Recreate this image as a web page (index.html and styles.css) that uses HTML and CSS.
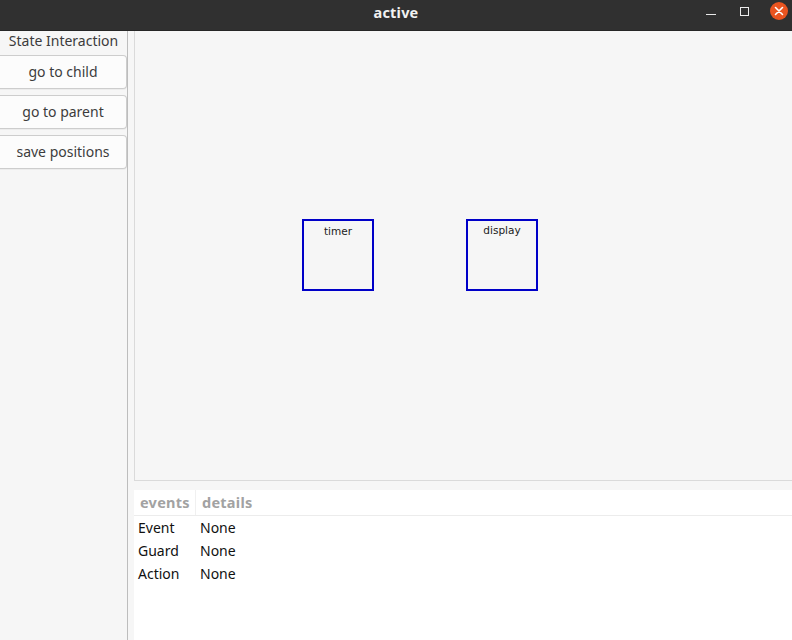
FILE: index.html
```html
<!DOCTYPE html>
<html>
<head>
<meta charset="utf-8">
<link rel="stylesheet" href="styles.css">
</head>
<body>
<div class="window">
  <div class="titlebar">
    <div class="title">active</div>
    <div class="controls">
      <span class="ctl min"></span>
      <span class="ctl max"></span>
      <span class="ctl close">
        <svg width="18" height="18" viewBox="0 0 18 18"><path d="M5.5 5.5 L12.5 12.5 M12.5 5.5 L5.5 12.5" stroke="#fff" stroke-width="1.6" stroke-linecap="round"/></svg>
      </span>
    </div>
  </div>
  <div class="body">
    <div class="sidebar">
      <div class="side-label">State Interaction</div>
      <button class="btn">go to child</button>
      <button class="btn">go to parent</button>
      <button class="btn">save positions</button>
    </div>
    <div class="divider"></div>
    <div class="main">
      <div class="canvas">
        <div class="node" style="left:167px;top:188px"><span class="node-label">timer</span></div>
        <div class="node" style="left:331px;top:188px"><span class="node-label d">display</span></div>
      </div>
      <div class="table">
        <div class="thead">
          <div class="th h1">events</div>
          <div class="th h2">details</div>
        </div>
        <div class="row"><div class="c1">Event</div><div class="c2">None</div></div>
        <div class="row"><div class="c1">Guard</div><div class="c2">None</div></div>
        <div class="row"><div class="c1">Action</div><div class="c2">None</div></div>
      </div>
    </div>
  </div>
</div>
</body>
</html>
```

FILE: styles.css
```css
* { box-sizing: border-box; }
html, body { margin: 0; padding: 0; }
body {
  width: 792px;
  height: 640px;
  overflow: hidden;
  font-family: "Noto Sans", "DejaVu Sans", sans-serif;
  background: #f6f6f6;
}
.window { display: flex; flex-direction: column; height: 640px; }
.titlebar {
  height: 31px;
  background: #303030;
  position: relative;
  display: flex;
  align-items: center;
  justify-content: center;
  border-bottom: 1px solid #262626;
}
.title {
  color: #f2f2f2;
  font-weight: bold;
  font-size: 14.5px;
  letter-spacing: 0.2px;
  margin-top: -6px;
}
.controls {
  position: absolute;
  right: 4px;
  top: 3px;
  display: flex;
  align-items: center;
  gap: 0;
}
.ctl { display: block; position: relative; }
.min { width: 10px; height: 1px; background: #e8e8e8; margin-right: 24px; margin-top: 5px; }
.max { width: 9px; height: 9px; border: 1.5px solid #ececec; margin-right: 21px; margin-top: 0px; }
.close {
  width: 18px; height: 18px; border-radius: 50%;
  background: #e95420;
  display: flex; align-items: center; justify-content: center;
  margin-top: -1px;
}
.close svg { display: block; }
.body { flex: 1; display: flex; min-height: 0; }
.sidebar {
  width: 127px;
  background: #f6f6f6;
  display: flex;
  flex-direction: column;
  padding-top: 0px;
}
.side-label {
  text-align: center;
  font-size: 14px;
  color: #3c3c3c;
  height: 24px;
  line-height: 19px;
}
.btn {
  font-family: inherit;
  font-size: 14px;
  color: #3c3c3c;
  height: 34px;
  width: 127px;
  margin: 0 0 6px 0;
  background: #fcfcfc;
  border: 1px solid #cdcdcd;
  border-left: none;
  border-radius: 0 4px 4px 0;
  box-shadow: 0 1px 0 rgba(0,0,0,0.04);
  padding: 0 0 2px 0;
}
.divider {
  width: 1px;
  background: #bdbdbd;
}
.main {
  flex: 1;
  display: flex;
  flex-direction: column;
  padding-left: 6px;
  background: #f6f6f6;
}
.canvas {
  height: 450px;
  border: 1px solid #dadada;
  border-right: none;
  border-top: none;
  background: #f6f6f6;
  position: relative;
}
.node {
  position: absolute;
  width: 72px;
  height: 72px;
  border: 2px solid #0000c8;
  display: flex;
  justify-content: center;
}
.node-label {
  font-family: "DejaVu Sans", sans-serif;
  font-size: 10.5px;
  color: #222;
  margin-top: 4px;
}
.node-label.d { margin-top: 3px; }
.table {
  flex: 1;
  margin-top: 9px;
  background: #fff;
  font-size: 14px;
}
.thead {
  display: flex;
  height: 26px;
  border-bottom: 1px solid #ececec;
  align-items: stretch;
}
.th { color: #a2a2a2; font-weight: bold; line-height: 23px; padding-top: 1px; font-size: 14.5px; letter-spacing: 0.25px; }
.th.h1 { width: 62px; padding-left: 6px; border-right: 1px solid #f0f0f0; }
.th.h2 { padding-left: 6px; }
.c1 { width: 62px; padding-left: 4px; }
.c2 { padding-left: 4px; }
.row {
  display: flex;
  height: 23px;
  line-height: 23px;
  color: #111;
}
```
